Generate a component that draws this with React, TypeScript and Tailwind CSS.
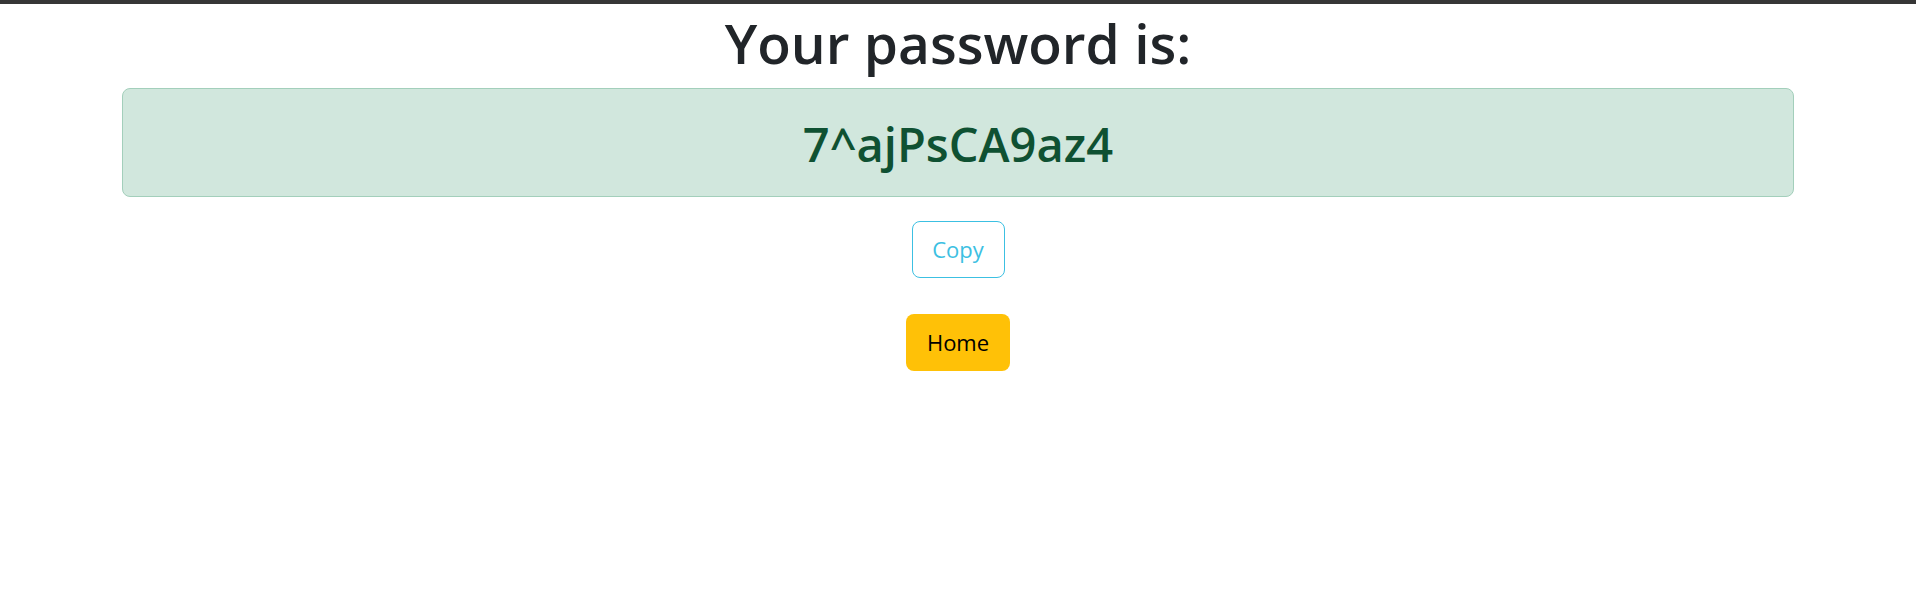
export default function App() {
  return (
    <div
      className="min-h-[589px] bg-white text-[#212529]"
      style={{ fontFamily: '"Open Sans", "Noto Sans", sans-serif' }}
    >
      <div className="h-[4px] bg-[#363636]" />
      <div className="flex flex-col items-center">
        <h1 className="mt-[6px] text-[55px] leading-[1.2] font-semibold">Your password is:</h1>
        <div className="mt-[12px] flex h-[109px] w-[calc(100%-244px)] items-center justify-center rounded-[8px] border border-[#a3cfbb] bg-[#d1e7dd]">
          <span className="mt-[4px] text-[47px] font-semibold text-[#0f5132]">7^ajPsCA9az4</span>
        </div>
        <button className="mt-[24px] h-[57px] w-[93px] rounded-[8px] border border-[#3cc0e2] text-[22px] text-[#3cc0e2]">
          Copy
        </button>
        <button className="mt-[36px] h-[57px] w-[104px] rounded-[8px] bg-[#ffc107] text-[22px] text-black">
          Home
        </button>
      </div>
    </div>
  );
}
